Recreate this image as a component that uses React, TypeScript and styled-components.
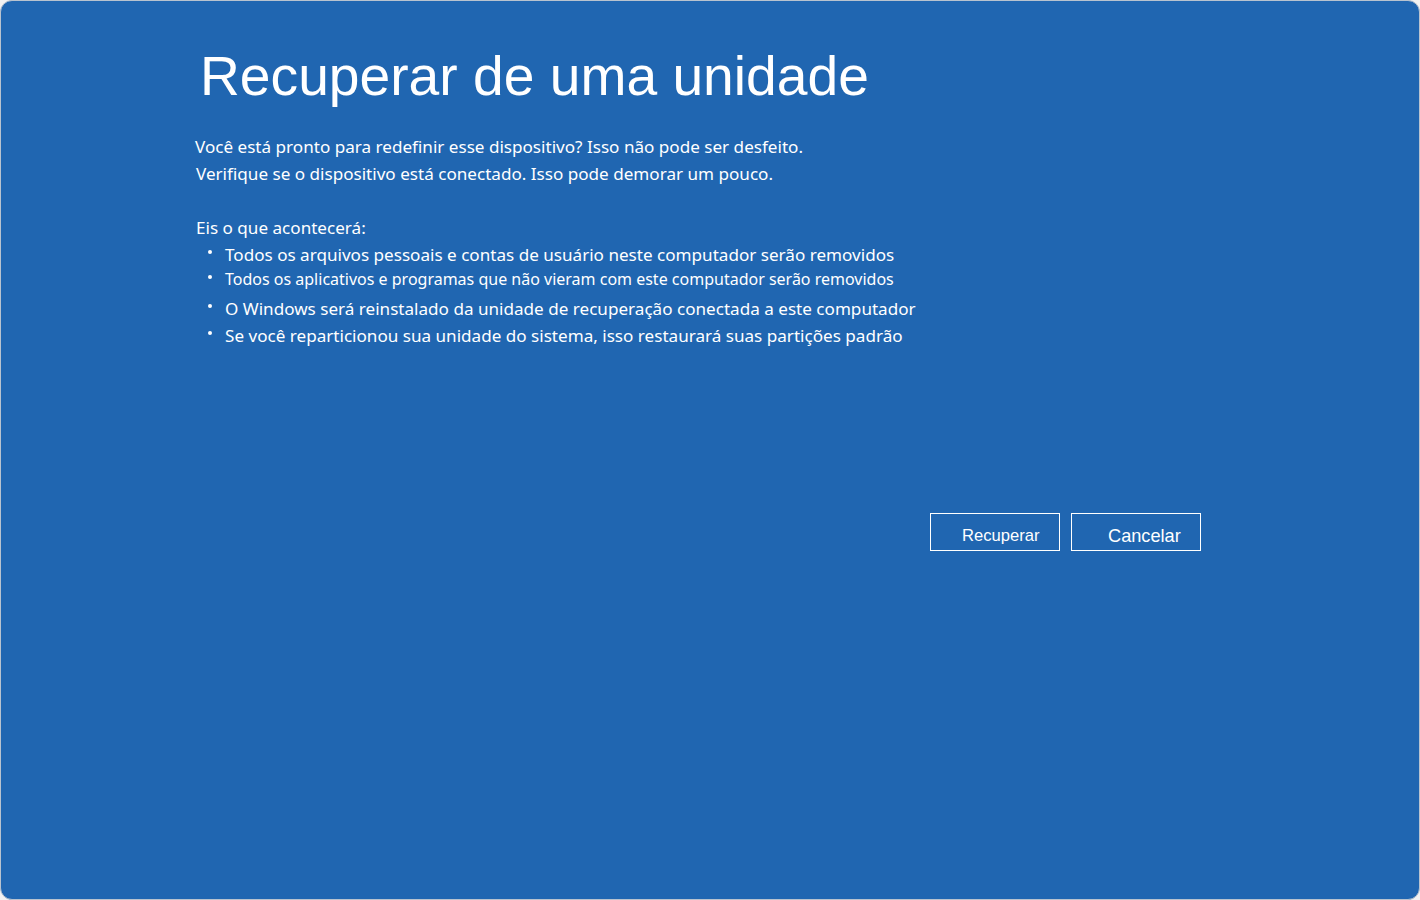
import styled, { createGlobalStyle } from "styled-components";

const GlobalStyle = createGlobalStyle`
  html, body {
    margin: 0;
    padding: 0;
    background: #f2f2f2;
  }
`;

const items = [
  { text: "Todos os arquivos pessoais e contas de usuário neste computador serão removidos" },
  { text: "Todos os aplicativos e programas que não vieram com este computador serão removidos", small: true },
  { text: "O Windows será reinstalado da unidade de recuperação conectada a este computador" },
  { text: "Se você reparticionou sua unidade do sistema, isso restaurará suas partições padrão" },
];

export default function App() {
  return (
    <>
      <GlobalStyle />
      <Screen>
        <Content>
          <Title>Recuperar de uma unidade</Title>
          <Intro>
            <p>Você está pronto para redefinir esse dispositivo? Isso não pode ser desfeito.</p>
            <p className="indent">Verifique se o dispositivo está conectado. Isso pode demorar um pouco.</p>
          </Intro>
          <Heading>Eis o que acontecerá:</Heading>
          <List>
            {items.map((item) => (
              <Item key={item.text} $small={item.small}>
                {item.text}
              </Item>
            ))}
          </List>
          <Actions>
            <Button $pad={31}>Recuperar</Button>
            <Button $pad={36} $strong>
              Cancelar
            </Button>
          </Actions>
        </Content>
      </Screen>
    </>
  );
}

const Screen = styled.div`
  box-sizing: border-box;
  width: 1420px;
  height: 900px;
  background: #2066b1;
  border: 1px solid #b9c3cf;
  border-radius: 12px;
  color: #fff;
  font-family: "Noto Sans", "Open Sans", sans-serif;
`;

const Content = styled.div`
  width: 1006px;
  padding: 43px 0 0 194px;
`;

const Title = styled.h1`
  margin: 0 0 0 5px;
  font-family: "Liberation Sans", Arial, sans-serif;
  font-weight: 400;
  font-size: 55.2px;
  line-height: 64px;
`;

const Intro = styled.div`
  margin-top: 25px;
  font-size: 17.1px;
  p {
    margin: 0;
    line-height: 27px;
  }
  .indent {
    padding-left: 1px;
  }
`;

const Heading = styled.div`
  margin: 27px 0 0 1px;
  font-size: 17.1px;
  line-height: 27px;
`;

const List = styled.ul`
  list-style: none;
  margin: 0;
  padding: 0 0 0 12px;
`;

const Item = styled.li<{ $small?: boolean }>`
  position: relative;
  padding-left: 18px;
  font-size: ${(p) => (p.$small ? "16px" : "17.1px")};
  line-height: ${(p) => (p.$small ? "23px" : "27px")};
  margin-bottom: ${(p) => (p.$small ? "4px" : "0")};
  &::before {
    content: "";
    position: absolute;
    left: 1px;
    top: calc(50% - 5px);
    width: 4px;
    height: 4px;
    border-radius: 50%;
    background: #fff;
  }
`;

const Actions = styled.div`
  display: flex;
  justify-content: flex-end;
  gap: 11px;
  margin-top: 164px;
`;

const Button = styled.button<{ $pad: number; $strong?: boolean }>`
  box-sizing: border-box;
  width: 130px;
  height: 38px;
  padding: 8px 0 0 ${(p) => p.$pad}px;
  text-align: left;
  background: transparent;
  border: 1px solid #fff;
  color: #fff;
  font-family: "Liberation Sans", Arial, sans-serif;
  font-size: ${(p) => (p.$strong ? "18.2px" : "16.6px")};
  cursor: pointer;
`;
